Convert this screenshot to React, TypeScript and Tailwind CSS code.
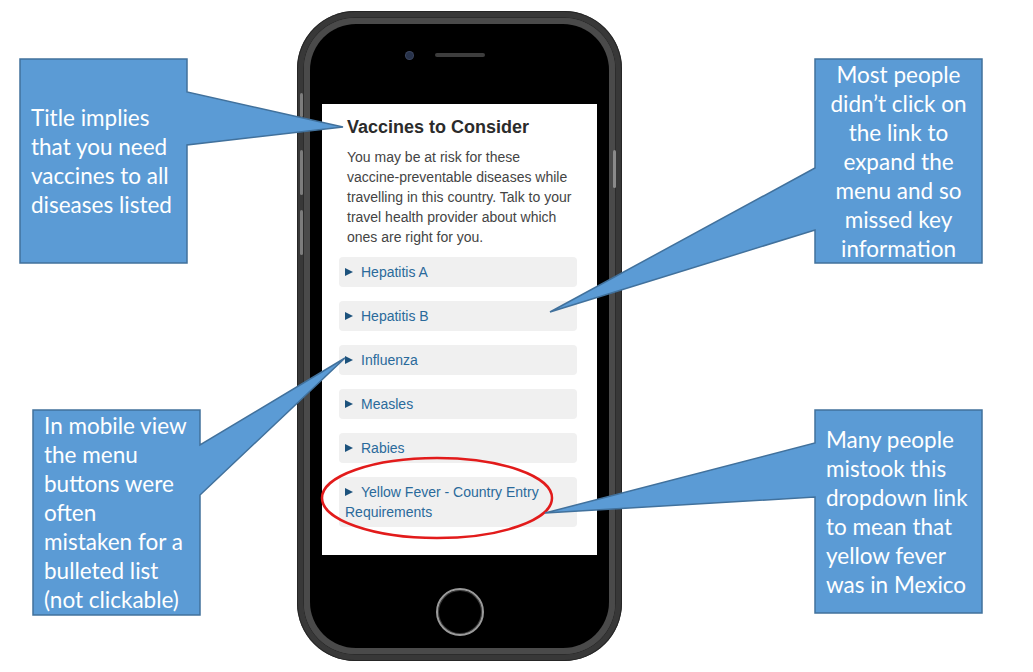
const items = [
  'Hepatitis A',
  'Hepatitis B',
  'Influenza',
  'Measles',
  'Rabies',
  'Yellow Fever - Country Entry Requirements',
]

const intro = [
  'You may be at risk for these',
  'vaccine-preventable diseases while',
  'travelling in this country. Talk to your',
  'travel health provider about which',
  'ones are right for you.',
]

type Callout = {
  box: { x: number; y: number; w: number; h: number }
  path: string
  lines: string[]
  align: 'left' | 'center'
}

const callouts: Callout[] = [
  {
    box: { x: 20, y: 59, w: 167, h: 204 },
    path: 'M20,59 L187,59 L187,92 L343,127 L187,145 L187,263 L20,263 Z',
    lines: ['Title implies', 'that you need', 'vaccines to all', 'diseases listed'],
    align: 'left',
  },
  {
    box: { x: 815, y: 59, w: 167, h: 204 },
    path: 'M815,59 L982,59 L982,263 L815,263 L815,230 L550,312 L815,168 Z',
    lines: [
      'Most people',
      'didn\u2019t click on',
      'the link to',
      'expand the',
      'menu and so',
      'missed key',
      'information',
    ],
    align: 'center',
  },
  {
    box: { x: 33, y: 410, w: 167, h: 205 },
    path: 'M33,410 L200,410 L200,445 L345,358 L200,495 L200,615 L33,615 Z',
    lines: [
      'In mobile view',
      'the menu',
      'buttons were',
      'often',
      'mistaken for a',
      'bulleted list',
      '(not clickable)',
    ],
    align: 'left',
  },
  {
    box: { x: 815, y: 410, w: 167, h: 203 },
    path: 'M815,410 L982,410 L982,613 L815,613 L815,497 L545,513 L815,443 Z',
    lines: [
      'Many people',
      'mistook this',
      'dropdown link',
      'to mean that',
      'yellow fever',
      'was in Mexico',
    ],
    align: 'left',
  },
]

function Phone() {
  return (
    <div className="relative w-[325px] h-[650px] rounded-[58px] bg-[#383838] p-[6px] shadow-[inset_0_0_0_1px_#262626]">
      {/* side buttons */}
      <div className="absolute left-[3px] top-[82px] h-[24px] w-[3px] rounded-full bg-[#7c7c7c]" />
      <div className="absolute left-[3px] top-[139px] h-[45px] w-[3px] rounded-full bg-[#7c7c7c]" />
      <div className="absolute left-[3px] top-[199px] h-[45px] w-[3px] rounded-full bg-[#7c7c7c]" />
      <div className="absolute right-[6px] top-[139px] h-[38px] w-[3px] rounded-full bg-[#8a8a8a]" />
      <div className="h-full w-full rounded-[52px] bg-[#4c4c4c] p-[1px] shadow-[inset_0_0_0_1px_#2c2c2c]">
        <div className="h-full w-full rounded-[51px] bg-[#4a4a4a] p-[6px]">
          <div className="flex h-full w-full flex-col items-center rounded-[46px] bg-black">
            <div className="mt-[28px] mr-[29px] flex h-[6px] items-center">
              <div className="h-[7px] w-[7px] rounded-full bg-[#27324a] shadow-[0_0_0_1px_#3c4660]" />
              <div className="ml-[22px] h-[4px] w-[50px] rounded-full bg-[#3d3d3d]" />
            </div>
            <Screen />
            <div className="mt-[33px] h-[48px] w-[48px] rounded-full border-[2px] border-[#9a9a9a] shadow-[inset_0_0_0_1px_#3a3a3a]" />
          </div>
        </div>
      </div>
    </div>
  )
}

function Screen() {
  return (
    <div className="mt-[46px] h-[451px] w-[275px] bg-white pl-[17px] pr-[20px] pt-[11px] font-['Liberation_Sans',Arial,sans-serif]">
      <h1 className="pl-[8px] text-[18px] font-bold leading-[24px] text-[#2b2b2b]">
        Vaccines to Consider
      </h1>
      <p className="mt-[8px] pl-[8px] text-[14px] leading-[20px] text-[#444]">
        {intro.map((l) => (
          <span key={l} className="block whitespace-nowrap">
            {l}
          </span>
        ))}
      </p>
      <div className="mt-[10px] flex flex-col gap-[14px]">
        {items.map((it) => (
          <div
            key={it}
            className="rounded-[4px] bg-[#f0f0f0] py-[5px] pl-[6px] pr-[4px] text-[14px] leading-[20px] text-[#2a6a9b]"
          >
            <span className="mr-[8px] inline-block h-0 w-0 border-y-[4px] border-l-[8px] border-y-transparent border-l-[#1c527c] align-[1px]" />
            {it}
          </div>
        ))}
      </div>
    </div>
  )
}

export default function App() {
  return (
    <div className="relative h-[672px] w-[1033px] overflow-hidden bg-white">
      <div className="ml-[297px] pt-[11px]">
        <Phone />
      </div>

      <svg className="pointer-events-none absolute inset-0" width={1033} height={672}>
        <ellipse cx={437} cy={498} rx={115} ry={40} fill="none" stroke="#e21b1b" strokeWidth={2.5} />
        {callouts.map((c, i) => (
          <path key={i} d={c.path} fill="#5b9bd5" stroke="#41719c" strokeWidth={1.5} />
        ))}
      </svg>

      {callouts.map((c, i) => (
        <div
          key={i}
          className={`absolute flex flex-col justify-center font-['Lato','Open_Sans',sans-serif] text-[22.5px] leading-[29px] text-white ${
            c.align === 'center' ? 'items-center' : 'items-start pl-[11px]'
          }`}
          style={{ left: c.box.x, top: c.box.y, width: c.box.w, height: c.box.h }}
        >
          {c.lines.map((l) => (
            <span key={l} className="whitespace-nowrap">
              {l}
            </span>
          ))}
        </div>
      ))}
    </div>
  )
}
